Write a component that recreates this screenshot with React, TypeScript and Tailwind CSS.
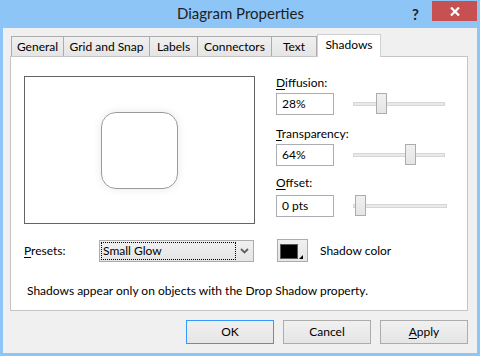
import React from "react";

type SliderProps = {
  label: string;
  accessKey: string;
  value: string;
  thumb: number; // thumb position from track start
  trackWidth: number;
  labelTop: string;
  labelBottom: string;
};

const tabs = [
  { name: "General", w: "w-[53px]", ml: "" },
  { name: "Grid and Snap", w: "w-[87px]", ml: "-ml-px" },
  { name: "Labels", w: "w-[49px]", ml: "-ml-px" },
  { name: "Connectors", w: "w-[75px]", ml: "-ml-px" },
  { name: "Text", w: "w-[46px]", ml: "-ml-px" },
];

const SliderRow = ({ label, accessKey, value, thumb, trackWidth, labelTop, labelBottom }: SliderProps) => {
  const rest = label.slice(1);
  return (
    <div className={labelTop}>
      <div className={`h-[14px] leading-[14px] ${labelBottom}`}>
        <span className="underline underline-offset-[2px]">{accessKey}</span>
        {rest}
      </div>
      <div className="flex items-center">
        <div className="w-[58px] h-[22px] border border-[#abadb3] bg-white pl-[5px] leading-[20px]">{value}</div>
        {/* slider */}
        <div className="relative ml-[19px] h-[22px]" style={{ width: trackWidth }}>
          <div className="absolute left-0 right-0 top-[9px] h-[4px] bg-[#e7eaea] border border-[#d6d6d6]" />
          <div
            className="absolute top-0 w-[11px] h-[21px] border border-[#acacac] bg-gradient-to-b from-[#f0f0f0] to-[#e5e5e5]"
            style={{ left: thumb }}
          />
        </div>
      </div>
    </div>
  );
};

const Button = ({ children, def }: { children: React.ReactNode; def?: boolean }) => (
  <div
    className={`w-[88px] h-[24px] flex items-center justify-center border bg-gradient-to-b from-[#f0f0f0] to-[#e5e5e5] ${
      def ? "border-[#3399ff]" : "border-[#acacac]"
    }`}>
    {children}
  </div>
);

export default function App() {
  return (
    <div className="w-[480px] h-[356px] bg-[#8dc5f7] flex flex-col font-['Lato',sans-serif] text-[12px] text-black">
      {/* title bar */}
      <div className="relative h-[28px] shrink-0 flex items-center justify-center">
        <span className="text-[15px] text-[#1e1e1e] -mt-[2px] ml-[1px]">Diagram Properties</span>
        <span className="absolute left-[412px] top-[3px] text-[15px] font-bold text-[#222]">?</span>
        <div className="absolute left-[432px] top-[1px] w-[45px] h-[20px] bg-[#c75050] flex items-center justify-center">
          <svg width="10" height="9" viewBox="0 0 10 9">
            <path d="M1 0.5 L9 8.5 M9 0.5 L1 8.5" stroke="white" strokeWidth="2.2" />
          </svg>
        </div>
      </div>

      {/* client area */}
      <div className="mx-[3px] mb-[3px] flex-1 bg-[#f0f0f0] flex flex-col">
        {/* tabs */}
        <div className="flex items-end h-[22px] mt-[6px] ml-[8px]">
          {tabs.map((t) => (
            <div
              key={t.name}
              className={`${t.w} ${t.ml} h-[20px] border border-b-0 border-[#acacac] bg-gradient-to-b from-[#f0f0f0] to-[#e5e5e5] flex items-center justify-center leading-none`}>
              {t.name}
            </div>
          ))}
          <div className="relative z-10 w-[64px] h-[23px] -mb-px border border-b-0 border-[#d0d0d0] bg-white flex items-start justify-center pt-[4px] leading-none">
            Shadows
          </div>
        </div>

        {/* panel */}
        <div className="ml-[7px] w-[458px] h-[255px] border border-[#c4c4c4] bg-white flex flex-col">
          <div className="flex pl-[13px] pt-[19px]">
            {/* preview */}
            <div className="w-[231px] h-[148px] border border-[#646464] flex items-center justify-center">
              <div className="w-[77px] h-[77px] rounded-[15px] border-[1.5px] border-[#9a9a9a] shadow-[0_0_10px_rgba(0,0,0,0.09)] mt-[1px]" />
            </div>

            <div className="ml-[21px] flex flex-col">
              <SliderRow label="Diffusion:" accessKey="D" value="28%" thumb={23} trackWidth={92} labelTop="" labelBottom="mb-[3px]" />
              <SliderRow label="Transparency:" accessKey="T" value="64%" thumb={52} trackWidth={92} labelTop="mt-[12px]" labelBottom="mb-[3px]" />
              <SliderRow label="Offset:" accessKey="O" value="0 pts" thumb={2} trackWidth={94} labelTop="mt-[10px]" labelBottom="mb-[5px]" />
            </div>
          </div>

          {/* presets row */}
          <div className="flex items-center h-[23px] mt-[15px] pl-[13px]">
            <div className="w-[75px]">
              <span className="underline underline-offset-[2px]">P</span>resets:
            </div>
            <div className="w-[155px] h-[22px] border border-[#acacac] bg-gradient-to-b from-[#f0f0f0] to-[#e5e5e5] flex items-center pl-[1px]">
              <div className="w-[135px] h-[18px] border border-dotted border-black pl-[1px] leading-[16px]">Small Glow</div>
              <div className="flex-1 flex justify-center">
                <svg width="9" height="6" viewBox="0 0 9 6">
                  <path d="M1 1 L4.5 4.5 L8 1" stroke="#606060" strokeWidth="1.8" fill="none" />
                </svg>
              </div>
            </div>
            <div className="relative ml-[23px] w-[31px] h-[23px] border border-[#acacac] bg-gradient-to-b from-[#f0f0f0] to-[#e5e5e5] flex items-start pl-[2px] pt-[4px]">
              <div className="w-[18px] h-[15px] bg-black border border-[#5a5a5a]" />
              <svg className="absolute left-[21px] top-[15px]" width="4" height="4" viewBox="0 0 4 4">
                <path d="M4 0 L4 4 L0 4 Z" fill="black" />
              </svg>
            </div>
            <div className="ml-[12px]">Shadow color</div>
          </div>

          <div className="mt-[22px] pl-[16px] leading-[14px]">Shadows appear only on objects with the Drop Shadow property.</div>
        </div>

        {/* buttons */}
        <div className="flex justify-end gap-[9px] pr-[9px] mt-[9px]">
          <Button def>OK</Button>
          <Button>Cancel</Button>
          <Button>
            <span>
              <span className="underline underline-offset-[2px]">A</span>pply
            </span>
          </Button>
        </div>
      </div>
    </div>
  );
}
